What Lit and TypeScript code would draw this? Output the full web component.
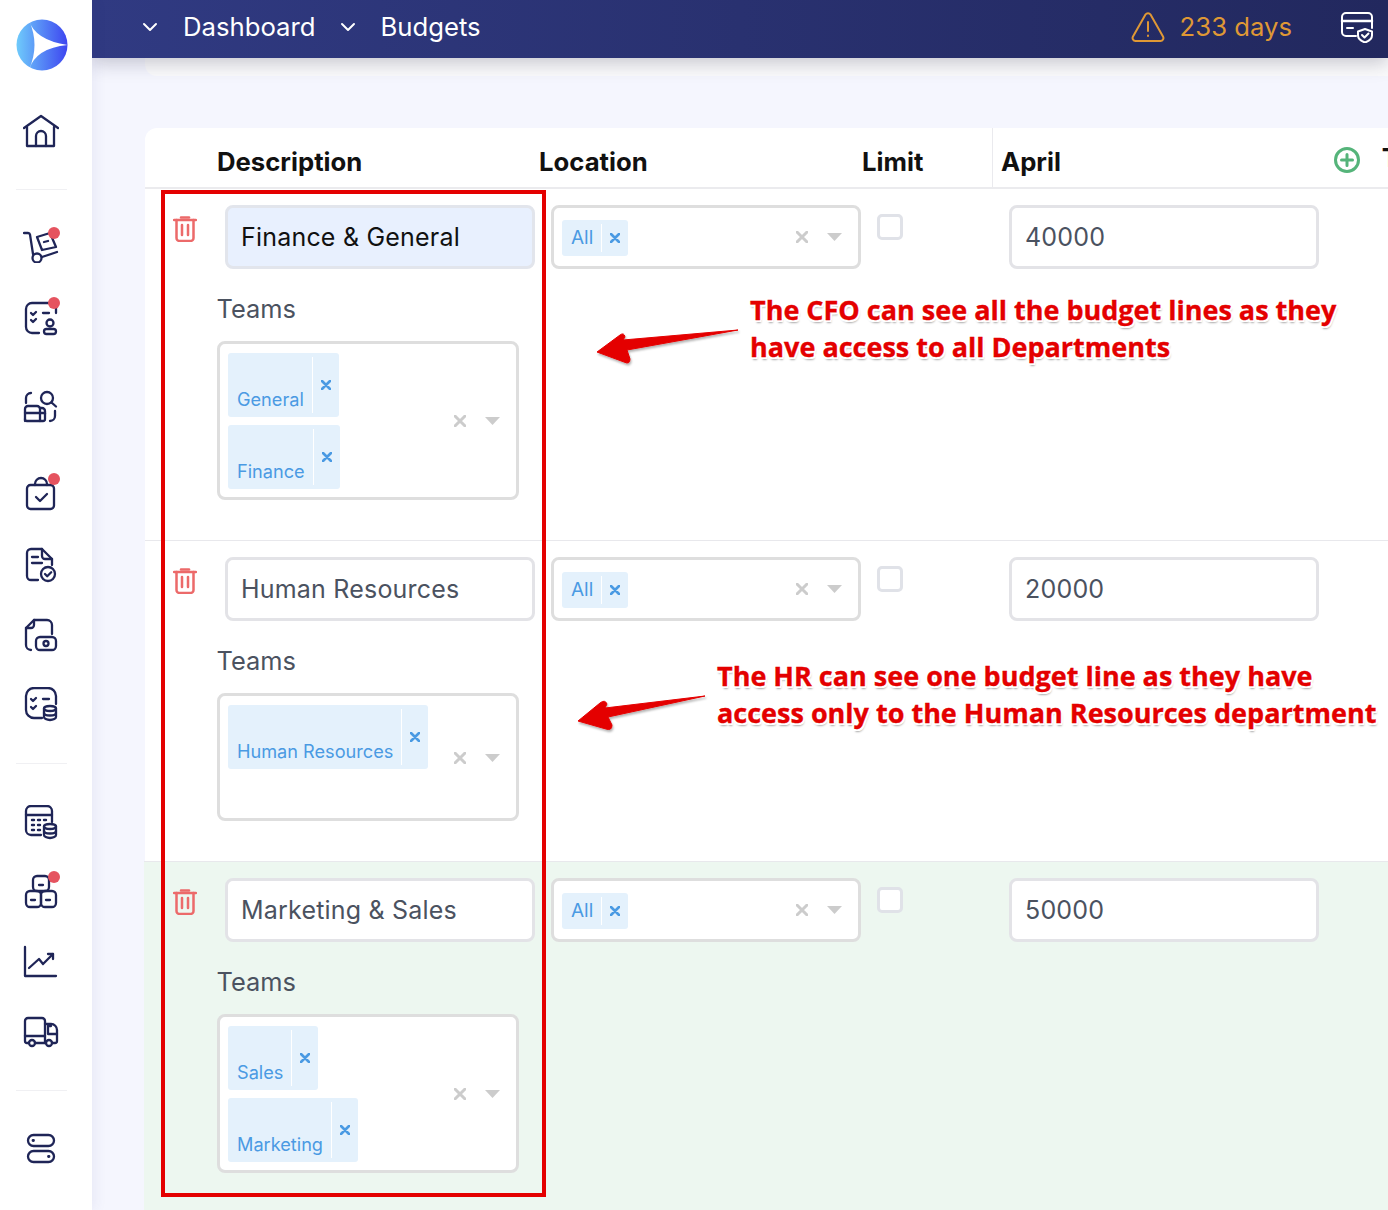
import { LitElement, html, css, svg } from "lit";
import { customElement } from "lit/decorators.js";

const NAV: { top: number; dot?: number; hr?: boolean; icon: any }[] = [
  { top: 0, icon: svg`<path d="M1 14 18 2l17 12"/><path d="M4 13v19h27V13"/><path d="M13 32V22a5 5 0 0 1 10 0v10"/>` },
  { top: 39, hr: true, icon: null },
  { top: 37, dot: 0, icon: svg`<path d="M1 6h4a2 2 0 0 1 2 1.6L10 27"/><circle cx="14" cy="31" r="4.5"/><path d="m19 30 15-5"/><path d="m14 10 13-4 6 14-14 3z"/><path d="m21 15 4-1"/>` },
  { top: 37, dot: -3, icon: svg`<path d="M27 3H9a6 6 0 0 0-6 6v18a6 6 0 0 0 6 6h7"/><path d="M33 8v5"/><path d="m8 13 2 2 3-3"/><path d="M20 13h6"/><path d="m8 20 2 2 3-3"/><circle cx="27" cy="23" r="3.5"/><rect x="21" y="29" width="12" height="5" rx="2.5"/>` },
  { top: 52, icon: svg`<path d="M3 15v-5a5 5 0 0 1 5-5"/><circle cx="24" cy="10" r="6"/><path d="m28.5 14.5 4.5 4"/><path d="M2 33V21a3 3 0 0 1 3-3h9a3 3 0 0 1 3 3v12"/><path d="M2 25h15l5 0v6a2 2 0 0 1-2 2H4a2 2 0 0 1-2-2"/><path d="M17 20h2a3 3 0 0 1 3 3v3"/><path d="M32 23v5a5 5 0 0 1-5 5"/>` },
  { top: 52, dot: -3, icon: svg`<rect x="4" y="9" width="27" height="24" rx="3.5"/><path d="M12 9V8a6 6 0 0 1 12 0v1"/><path d="m13 21 4 4 7-7"/>` },
  { top: 35, icon: svg`<path d="M15 33H8a4 4 0 0 1-4-4V6a4 4 0 0 1 4-4h11l10 10v6"/><path d="M19 2v7a3 3 0 0 0 3 3h7"/><path d="M9 10h6M9 16h10"/><circle cx="25" cy="27" r="7"/><path d="m22 27 2.200 2.200 4-4"/>` },
  { top: 34, icon: svg`<path d="M8 33a5 5 0 0 1-5-5V11l8-8h13a5 5 0 0 1 5 5v9"/><path d="M3 11h5a3 3 0 0 0 3-3V3"/><rect x="13" y="20" width="20" height="13" rx="4"/><circle cx="23" cy="26.500" r="2.500"/>` },
  { top: 34, icon: svg`<path d="M19 31h-8a8 8 0 0 1-8-8V9a8 8 0 0 1 8-8h14a8 8 0 0 1 8 8v8"/><path d="m8 12 2 2 3-3"/><path d="M20 12h6"/><path d="m8 20 2 2 3-3"/><ellipse cx="27" cy="21.500" rx="6" ry="2.500"/><path d="M21 21.500V30c0 1.500 2.700 3 6 3s6-1.500 6-3v-8.500"/><path d="M21 26c0 1.500 2.700 2.500 6 2.500s6-1 6-2.500"/>` },
  { top: 40, hr: true, icon: null },
  { top: 41, icon: svg`<path d="M18 30H8a5 5 0 0 1-5-5V6a5 5 0 0 1 5-5h16a5 5 0 0 1 5 5v11"/><path d="M3 10h26"/><path d="M9 15h2M15 15h2M21 15h2M9 20h2M15 20h2M9 25h2M15 25h2" stroke-width="2.400"/><ellipse cx="27" cy="21.500" rx="6" ry="2.500"/><path d="M21 21.500V30c0 1.500 2.700 3 6 3s6-1.500 6-3v-8.500"/><path d="M21 26c0 1.500 2.700 2.500 6 2.500s6-1 6-2.500"/>` },
  { top: 33, dot: -3, icon: svg`<rect x="10" y="2" width="16" height="15" rx="4"/><rect x="3" y="17" width="15" height="16" rx="4"/><rect x="18" y="17" width="15" height="16" rx="4"/><path d="M16 11h4M8 26h4M23 26h4"/>` },
  { top: 35, icon: svg`<path d="M2 2v29h31"/><path d="m6 23 10-9 4 5 10-10"/><path d="M25 9h5v5"/>` },
  { top: 33, icon: svg`<path d="M5 29H4a2 2 0 0 1-2-2V7a3 3 0 0 1 3-3h14a3 3 0 0 1 3 3v22"/><path d="M2 22h20"/><path d="M12 29h11"/><path d="M22 10h6a6 6 0 0 1 6 6v11a2 2 0 0 1-2 2h-3"/><path d="M28 12h-3v8h9"/><circle cx="9" cy="29" r="3"/><circle cx="26" cy="29" r="3"/>` },
  { top: 40, hr: true, icon: null },
  { top: 39, icon: svg`<rect x="5" y="5" width="26" height="11" rx="5.500"/><rect x="5" y="21" width="26" height="11" rx="5.500"/><path d="M10 10.500h.5M25.500 26.500h.5" stroke-width="2.800"/>` },
];

interface Row {
  name: string;
  amount: string;
  teams: string[];
  tint?: boolean;
  autofill?: boolean;
  tall?: boolean;
}

const ROWS: Row[] = [
  { name: "Finance & General", amount: "40000", teams: ["General", "Finance"], autofill: true },
  { name: "Human Resources", amount: "20000", teams: ["Human Resources"], tall: true },
  { name: "Marketing & Sales", amount: "50000", teams: ["Sales", "Marketing"], tint: true },
];

const x = svg`<path d="m1 1 8 8M9 1 1 9"/>`;

@customElement("app-root")
export class AppRoot extends LitElement {
  static styles = css`
    :host { display: block; position: relative; width: 1388px; height: 1210px; overflow: hidden; background: #f5f6fe; font-family: Inter, "Liberation Sans", sans-serif; color: #111; }
    .shell { display: flex; height: 100%; }
    .side { position: relative; z-index: 3; flex: none; width: 92px; background: #fff; box-shadow: 3px 0 12px rgba(60, 60, 140, .07); padding: 19px 0 0 16px; box-sizing: border-box; }
    .logo { display: block; width: 52px; height: 52px; margin-bottom: 43px; }
    .nav { position: relative; display: block; width: 36px; height: 36px; margin-left: 7px; }
    .nav svg { display: block; fill: none; stroke: #1f2557; stroke-width: 2.300; stroke-linecap: round; stroke-linejoin: round; }
    .nav i { position: absolute; left: 25px; width: 12px; height: 12px; border-radius: 50%; background: #e5535f; }
    .rule { height: 1px; width: 51px; background: #f0f0f3; }
    .main { flex: 1; min-width: 0; display: flex; flex-direction: column; }
    .top { position: relative; z-index: 2; flex: none; height: 58px; box-sizing: border-box; display: flex; align-items: center; padding: 0 14px 5px 50px; background: linear-gradient(90deg, #303a82, #22285e); box-shadow: 0 5px 18px rgba(30, 30, 60, .24); color: #fff; font-size: 25.700px; }
    .crumb { display: flex; align-items: center; margin-right: 24px; }
    .crumb svg { fill: none; stroke: #fff; stroke-width: 2; stroke-linecap: round; stroke-linejoin: round; margin-right: 25px; }
    .grow { flex: 1; }
    .warn { display: flex; align-items: center; color: #df9835; margin-right: 48px; gap: 15px; }
    .warn svg { fill: none; stroke: #df9835; stroke-width: 2; stroke-linecap: round; stroke-linejoin: round; }
    .pay { fill: none; stroke: #fff; stroke-width: 2; stroke-linecap: round; stroke-linejoin: round; }
    .body { padding-left: 53px; flex: 1; min-height: 0; }
    .stub { height: 18px; background: #fbfbfc; border-radius: 0 0 0 12px; margin-bottom: 52px; }
    .card { background: #fff; border-radius: 12px 0 0 0; }
    .head { box-sizing: content-box; display: grid; grid-template-columns: 394px 323px 130px 1fr; height: 59px; border-bottom: 2px solid #ebebee; overflow: hidden; font-size: 25.700px; font-weight: 700; align-items: center; }
    .head > div { padding-top: 8px; }
    .head > div:first-child { padding-left: 72px; }
    .head .apr { box-sizing: border-box; display: flex; align-items: center; height: 100%; border-left: 1px solid #eaeaee; padding-left: 8px; white-space: nowrap; padding-top: 0; }
    .head .apr > span:first-child { padding-top: 8px; }
    .head .apr svg { margin-left: auto; margin-right: 22px; fill: none; stroke: #55b47a; stroke-width: 3; stroke-linecap: round; flex: none; margin-top: 5px; }
    .head .apr .next { margin-right: -56px; padding-top: 0; margin-top: 0; }
    .row { display: grid; grid-template-columns: 406px 326px 132px 1fr; padding: 16px 0 40px; border-top: 1px solid #e8e8ec; }
    .row.first { border-top: 0; }
    .row.tint { background: #edf7f0; margin-left: -1px; padding-left: 1px; }
    .desc-top { display: flex; padding-left: 28px; }
    .trash { flex: none; margin: 11px 28px 0 0; fill: none; stroke: #ec6a6a; stroke-width: 2.500; stroke-linecap: round; stroke-linejoin: round; }
    .input { box-sizing: border-box; height: 64px; width: 310px; display: flex; align-items: center; padding-left: 13px; border: 3px solid #e3e3e7; border-radius: 8px; background: #fff; font-size: 25px; color: #4b5260; letter-spacing: .2px; }
    .input.auto { background: #e8f0fe; color: #111; border-color: #e2e5ec; }
    .teams { padding-left: 72px; }
    .teams label { display: block; font-size: 25.400px; color: #4b5260; line-height: 30px; margin: 25px 0 17px -.5px; }
    .multi { box-sizing: border-box; width: 302px; display: flex; align-items: center; border: 3px solid #dedede; border-radius: 8px; background: #fff; padding: 9px 16px 8px 8px; }
    .multi.tall { min-height: 128px; align-items: stretch; }
    .chips { flex: 1; display: flex; flex-direction: column; align-items: flex-start; gap: 8px; }
    .chip { display: flex; height: 64px; background: #e4f1fc; border-radius: 3px; color: #4a9ae3; font-size: 18.150px; }
    .chip .t { display: flex; align-items: flex-end; padding: 0 8px 7px 9px; line-height: 22px; }
    .chip .c { display: flex; align-items: center; justify-content: center; width: 26px; margin: 4px 0; border-left: 1px solid #fff; }
    .chip svg, .sel-chip svg { fill: none; stroke: #4a9ae3; stroke-width: 2.600; stroke-linecap: round; }
    .ind { display: flex; align-items: center; gap: 19px; }
    .ind .clr { fill: none; stroke: #ccc; stroke-width: 2.500; stroke-linecap: round; }
    .ind .car { fill: #ccc; }
    .multi .ind { align-self: center; }
    .sel { box-sizing: border-box; width: 310px; height: 64px; display: flex; align-items: center; border: 3px solid #dedede; border-radius: 8px; background: #fff; padding: 0 16px 0 8px; }
    .sel-wrap { display: flex; flex: 1; padding-top: 2px; }
    .sel-chip { display: flex; height: 36px; background: #e4f1fc; border-radius: 3px; color: #4a9ae3; font-size: 19px; align-items: center; }
    .sel-chip .t { padding: 0 8px 2px 9px; }
    .sel-chip .c { display: flex; align-items: center; justify-content: center; width: 26px; height: 28px; border-left: 1px solid #fff; }
    .check { display: block; box-sizing: border-box; width: 26px; height: 26px; margin-top: 9px; border: 3px solid #e0e2e8; border-radius: 5px; background: #fff; }
    .overlay { position: absolute; inset: 0; z-index: 5; pointer-events: none; }
    .frame { position: absolute; left: 161px; top: 190px; width: 385px; height: 1007px; box-sizing: border-box; border: 4px solid #e40000; }
    .note { position: absolute; margin: 0; font-family: "Open Sans", "Noto Sans", sans-serif; font-weight: 700; font-size: 27px; line-height: 37px; color: #e40000; white-space: nowrap; -webkit-text-stroke: .35px #e40000; text-shadow: -2px 0 #fff, 2px 0 #fff, 0 -2px #fff, 0 2px #fff, -1.500px -1.500px #fff, 1.500px -1.500px #fff, -1.500px 1.500px #fff, 1.500px 1.500px #fff, 1px 3px 2px #aaa; }
    .n1 { left: 750px; top: 291px; }
    .n2 { left: 717px; top: 657px; }
    .arrow { position: absolute; left: 0; top: 0; }
  `;

  private indicators() {
    return html`<div class="ind">
      <svg class="clr" width="12" height="12" viewBox="0 0 10 10">${x}</svg>
      <svg class="car" width="15" height="8" viewBox="0 0 15 8"><path d="M0 0h15L7.500 8z"/></svg>
    </div>`;
  }

  private row(r: Row, i: number) {
    return html`<div class="row ${i === 0 ? "first" : ""} ${r.tint ? "tint" : ""}">
      <div>
        <div class="desc-top">
          <svg class="trash" width="24" height="26" viewBox="0 0 24 26"><path d="M1 4h22"/><path d="M8 1.500h8"/><path d="M3.500 4v18a3 3 0 0 0 3 3h11a3 3 0 0 0 3-3V4"/><path d="M9 9v10M15 9v10"/></svg>
          <div class="input ${r.autofill ? "auto" : ""}">${r.name}</div>
        </div>
        <div class="teams">
          <label>Teams</label>
          <div class="multi ${r.tall ? "tall" : ""}">
            <div class="chips">
              ${r.teams.map(t => html`<div class="chip"><span class="t">${t}</span><span class="c"><svg width="10" height="10" viewBox="0 0 10 10">${x}</svg></span></div>`)}
            </div>
            ${this.indicators()}
          </div>
        </div>
      </div>
      <div>
        <div class="sel">
          <div class="sel-wrap"><div class="sel-chip"><span class="t">All</span><span class="c"><svg width="10" height="10" viewBox="0 0 10 10">${x}</svg></span></div></div>
          ${this.indicators()}
        </div>
      </div>
      <div><span class="check"></span></div>
      <div><div class="input">${r.amount}</div></div>
    </div>`;
  }

  render() {
    return html`
      <div class="shell">
        <aside class="side">
          <svg class="logo" viewBox="0 0 52 52">
            <defs><linearGradient id="lg" x1="0" x2="1" y1="0" y2="0"><stop offset="0" stop-color="#6fcbfb"/><stop offset="1" stop-color="#3d45f0"/></linearGradient></defs>
            <circle cx="26" cy="26" r="25.500" fill="url(#lg)"/>
            <path d="M13 1.500Q19 21 51.500 26 20 29 13 50.500 24 26 13 1.500z" fill="#fff"/>
          </svg>
          ${NAV.map(n => n.hr
            ? html`<div class="rule" style="margin-top:${n.top}px"></div>`
            : html`<div class="nav" style="margin-top:${n.top}px"><svg width="36" height="36" viewBox="0 0 36 36">${n.icon}</svg>${n.dot !== undefined ? html`<i style="top:${n.dot}px"></i>` : ""}</div>`)}
        </aside>
        <div class="main">
          <header class="top">
            <div class="crumb"><svg width="16" height="10" viewBox="0 0 16 10"><path d="m2 2 6 6 6-6"/></svg>Dashboard</div>
            <div class="crumb"><svg width="16" height="10" viewBox="0 0 16 10"><path d="m2 2 6 6 6-6"/></svg>Budgets</div>
            <div class="grow"></div>
            <div class="warn">
              <svg width="34" height="32" viewBox="0 0 34 32"><path d="M14.500 3.500 2 25.500A3 3 0 0 0 4.500 30h25a3 3 0 0 0 2.500-4.500L19.500 3.500a3 3 0 0 0-5 0z"/><path d="M17 11v9M17 24.500v.5"/></svg>
              <span>233 days</span>
            </div>
            <svg class="pay" width="34" height="32" viewBox="0 0 34 32"><path d="M16 25H6a4 4 0 0 1-4-4V6a4 4 0 0 1 4-4h22a4 4 0 0 1 4 4v11"/><path d="M2 10h30" stroke-width="2.500"/><path d="M7 17h6"/><path d="M25 18l7 2.500v4c0 3.500-3 5.500-7 7-4-1.500-7-3.500-7-7v-4z"/><path d="m22 24 2.500 2.500 4-4"/></svg>
          </header>
          <div class="body">
            <div class="stub"></div>
            <section class="card">
              <div class="head">
                <div>Description</div>
                <div>Location</div>
                <div>Limit</div>
                <div class="apr"><span>April</span><svg width="26" height="26" viewBox="0 0 26 26"><circle cx="13" cy="13" r="11.500"/><path d="M13 7.500v11M7.500 13h11"/></svg><span class="next">Total</span></div>
              </div>
              ${ROWS.map((r, i) => this.row(r, i))}
            </section>
          </div>
        </div>
      </div>
      <div class="overlay">
        <div class="frame"></div>
        <svg class="arrow" width="1388" height="1210" viewBox="0 0 1388 1210">
          <defs>
            <filter id="as" x="-10%" y="-30%" width="120%" height="170%"><feDropShadow dx="1" dy="2" stdDeviation="1" flood-color="#000" flood-opacity=".3"/></filter>
          </defs>
          <path filter="url(#as)" fill="#e40000" stroke="#e40000" stroke-width="1" stroke-linejoin="round" d="M597 352 620 335Q624 332 625 337L623 340 738 330 627 350 630 359Q630 365 624 362z"/>
          <path filter="url(#as)" fill="#e40000" stroke="#e40000" stroke-width="1" stroke-linejoin="round" d="M578 721 600 703Q605 699 607 704L605 708 705 696 608 717 612 725Q612 731 606 729z"/>
        </svg>
        <p class="note n1">The CFO can see all the budget lines as they<br>have access to all Departments</p>
        <p class="note n2">The HR can see one budget line as they have<br>access only to the Human Resources department</p>
      </div>
    `;
  }
}
